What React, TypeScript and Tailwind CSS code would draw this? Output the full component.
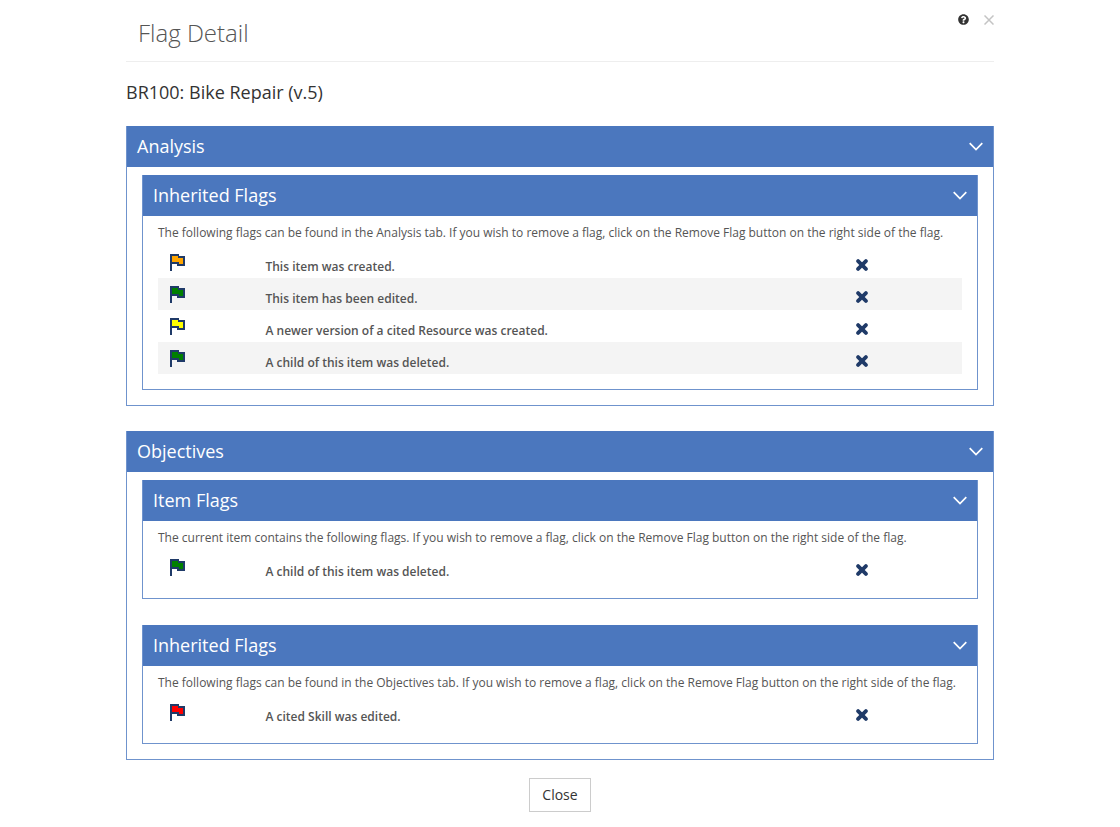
import React, { useState } from 'react';
import { FaQuestionCircle } from 'react-icons/fa';

type Flag = {
  color: string;
  text: string;
};

const inheritedIntro = (tab: string) =>
  `The following flags can be found in the ${tab} tab. If you wish to remove a flag, click on the Remove Flag button on the right side of the flag.`;

const sections = [
  {
    title: 'Analysis',
    groups: [
      {
        title: 'Inherited Flags',
        intro: inheritedIntro('Analysis'),
        flags: [
          { color: 'orange', text: 'This item was created.' },
          { color: 'green', text: 'This item has been edited.' },
          { color: 'yellow', text: 'A newer version of a cited Resource was created.' },
          { color: 'green', text: 'A child of this item was deleted.' },
        ],
      },
    ],
  },
  {
    title: 'Objectives',
    groups: [
      {
        title: 'Item Flags',
        intro:
          'The current item contains the following flags. If you wish to remove a flag, click on the Remove Flag button on the right side of the flag.',
        flags: [{ color: 'green', text: 'A child of this item was deleted.' }],
      },
      {
        title: 'Inherited Flags',
        intro: inheritedIntro('Objectives'),
        flags: [{ color: 'red', text: 'A cited Skill was edited.' }],
      },
    ],
  },
];

const FlagIcon: React.FC<{ color: string }> = ({ color }) => (
  <svg width="15" height="17" viewBox="0 0 15 17" shapeRendering="crispEdges" role="img" aria-label={`${color} flag`}>
    <path d="M0 0H9V2H15V12H7V10H2V17H0Z" fill="#1f3a68" />
    <path d="M2 2H8V4H13V10H9V8H2Z" fill={color} />
  </svg>
);

const RemoveIcon = () => (
  <svg width="12" height="12" viewBox="0 0 12 12" aria-hidden="true">
    <path
      d="M2.1 2.1L9.9 9.9M9.9 2.1L2.1 9.9"
      stroke="#1f3a68"
      strokeWidth="3.8"
      strokeLinecap="round"
      fill="none"
    />
  </svg>
);

const Panel: React.FC<{ title: string; children: React.ReactNode }> = ({ title, children }) => {
  const [open, setOpen] = useState(true);

  return (
    <section className="border border-t-0 border-[#6f93cd]">
      <button
        type="button"
        aria-expanded={open}
        onClick={() => setOpen(!open)}
        className="flex h-[41px] w-full items-center justify-between bg-[#4b77be] px-2.5 pb-px text-left text-lg text-white"
      >
        {title}
        <svg width="14" height="9" viewBox="0 0 14 9" fill="none" aria-hidden="true">
          <path d="M0.7 1.2L7 7.6L13.3 1.2" stroke="white" strokeWidth="1.7" />
        </svg>
      </button>
      {open && <div className="px-[15px] pt-2 pb-[15px]">{children}</div>}
    </section>
  );
};

const FlagTable: React.FC<{ flags: Flag[] }> = ({ flags }) => (
  <table className="mt-1 w-full table-fixed text-xs font-semibold text-[#555]">
    <tbody>
      {flags.map((flag) => (
        <tr key={flag.text} className="h-8 even:bg-[#f4f4f4]">
          <td className="w-[12%] pt-2 pl-3 align-top">
            <FlagIcon color={flag.color} />
          </td>
          <td className="pt-2.5 pl-[11px] leading-[22px]">{flag.text}</td>
          <td className="w-1/4 pt-1.5 align-middle">
            <button type="button" aria-label="Remove Flag" className="ml-[95px] block">
              <RemoveIcon />
            </button>
          </td>
        </tr>
      ))}
    </tbody>
  </table>
);

export default function App() {
  return (
    <main className="mx-auto max-w-[868px] bg-white pb-4 font-['Open_Sans','Noto_Sans',sans-serif] text-[#333]">
      <header className="flex h-[62px] items-start justify-between border-b border-[#eee]">
        <h1 className="pt-[15px] pl-3 text-2xl leading-9 font-light text-[#555]">Flag Detail</h1>
        <div className="flex items-center gap-[15px] pt-3.5">
          <a href="#help" aria-label="Help">
            <FaQuestionCircle className="size-[11px]" />
          </a>
          <button type="button" aria-label="Close dialog">
            <svg width="10" height="10" viewBox="0 0 10 10" aria-hidden="true">
              <path d="M0.5 0.5L9.5 9.5M9.5 0.5L0.5 9.5" stroke="#c4c4c4" strokeWidth="1.5" />
            </svg>
          </button>
        </div>
      </header>

      <h2 className="mt-4 mb-5 text-lg">BR100: Bike Repair (v.5)</h2>

      <div className="space-y-[25px]">
        {sections.map((section) => (
          <Panel key={section.title} title={section.title}>
            <div className="space-y-[26px]">
              {section.groups.map((group) => (
                <Panel key={group.title} title={group.title}>
                  <p className="text-xs leading-[18px] text-[#555]">{group.intro}</p>
                  <FlagTable flags={group.flags} />
                </Panel>
              ))}
            </div>
          </Panel>
        ))}
      </div>

      <div className="mt-[18px] text-center">
        <button type="button" className="border border-[#ccc] px-3 py-1.5 text-sm">
          Close
        </button>
      </div>
    </main>
  );
}
